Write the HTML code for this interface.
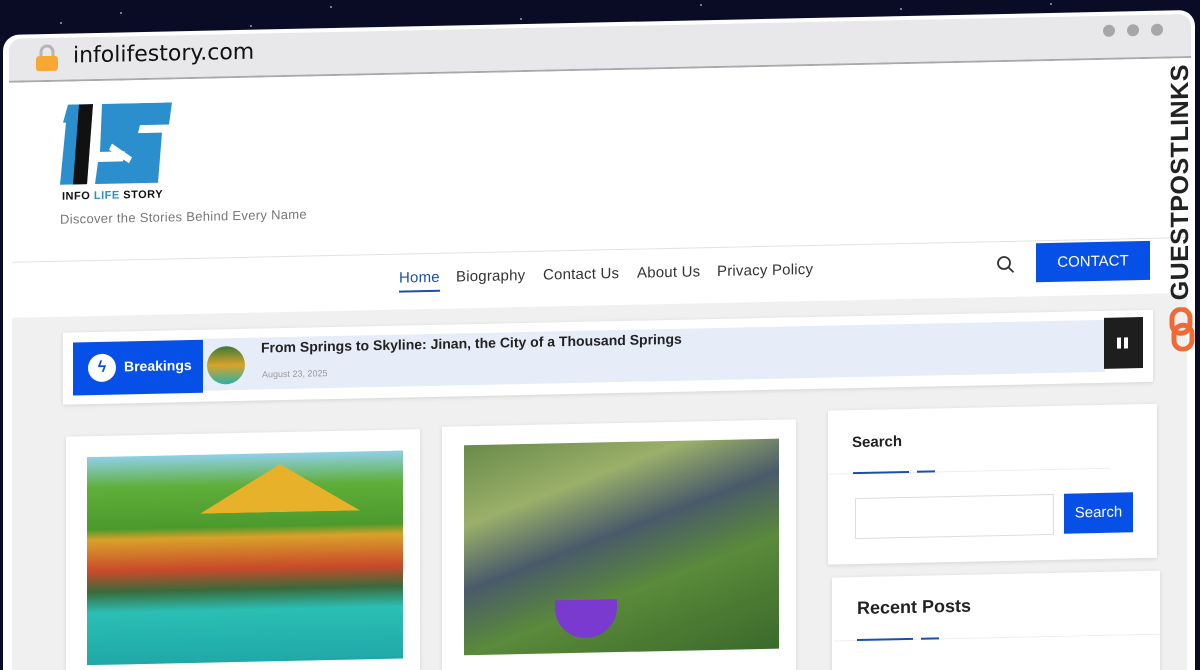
<!DOCTYPE html>
<html><head><meta charset="utf-8"><style>
*{margin:0;padding:0;box-sizing:border-box}
html,body{width:1200px;height:670px;overflow:hidden}
body{background:#0a0c26;font-family:"Liberation Sans",sans-serif;position:relative}
#clip{position:absolute;left:0;top:0;width:1200px;height:670px;overflow:hidden}
.star{position:absolute;width:2px;height:2px;background:#fff;border-radius:50%;opacity:.6}
#w{position:absolute;left:0;top:0;width:1200px;height:700px;transform-origin:0 0;transform:skewY(-1.2deg)}
.a{position:absolute}
.win{left:3px;top:35px;width:1192px;height:665px;background:#fff;border-radius:16px 16px 0 0;overflow:hidden}
.chrome{left:6px;top:4px;width:1182px;height:44px;background:#e8e8ea;border-radius:12px 12px 0 0;border-bottom:2px solid #a9a9ad}
.content{left:10px;top:50px;width:1175px;height:615px;background:#fff}
.nav a{position:absolute;font-size:15px;color:#333;text-decoration:none;letter-spacing:.2px}
.card{background:#fff;box-shadow:0 1px 4px rgba(0,0,0,.12)}
</style></head><body>
<div id="clip">
<div class="star" style="left:120px;top:12px"></div><div class="star" style="left:330px;top:6px"></div><div class="star" style="left:520px;top:18px"></div><div class="star" style="left:700px;top:4px"></div><div class="star" style="left:900px;top:8px"></div><div class="star" style="left:60px;top:22px"></div><div class="star" style="left:250px;top:25px"></div><div class="star" style="left:1050px;top:3px"></div>
<div id="w">
<div class="a win">
 <div class="a chrome"></div>
 <div class="a content"></div>
</div>
<svg class="a" style="left:35px;top:45px" width="24" height="28" viewBox="0 0 24 28"><path d="M6 13V8a6 6 0 0 1 12 0v5" fill="none" stroke="#b5b5b5" stroke-width="3"/><rect x="1" y="12" width="22" height="15" rx="3" fill="#f7a832"/></svg>
<div class="a" style="left:73px;top:45px;font-size:22px;color:#111;font-family:'DejaVu Sans',sans-serif;font-weight:500">infolifestory.com</div>
<div class="a" style="left:1103px;top:48px;width:12px;height:12px;border-radius:50%;background:#a7a7aa"></div>
<div class="a" style="left:1127px;top:48px;width:12px;height:12px;border-radius:50%;background:#a7a7aa"></div>
<div class="a" style="left:1151px;top:48px;width:12px;height:12px;border-radius:50%;background:#a7a7aa"></div>
<svg class="a" style="left:60px;top:106px" width="115" height="82" viewBox="0 0 115 82"><path d="M8 0h25l-6 80H0l6-62H3z" fill="#2a8fcc"/><path d="M19 0h14l-6 80H13z" fill="#111"/><path d="M42 0h70l-3 22H80l-2 8h24l-4 50H35l3-22h25l2-10H40z" fill="#2a8fcc"/><path d="M52 40l20 14-3 6-20-14z" fill="#fff"/></svg>
<div class="a" style="left:62px;top:192px;font-size:11px;font-weight:bold;color:#111;letter-spacing:.5px">INFO <span style="color:#2a8fcc">LIFE</span> STORY</div>
<div class="a" style="left:60px;top:213px;font-size:13px;color:#777;letter-spacing:.3px">Discover the Stories Behind Every Name</div>
<div class="a" style="left:12px;top:262px;width:1175px;height:1px;background:#e2e2e2"></div>
<div class="nav">
<a style="left:399px;top:278px;color:#1a4fb0">Home</a>
<div class="a" style="left:399px;top:299px;width:41px;height:2px;background:#1a4fb0"></div>
<a style="left:456px;top:278px">Biography</a>
<a style="left:543px;top:278px">Contact Us</a>
<a style="left:637px;top:278px">About Us</a>
<a style="left:717px;top:278px">Privacy Policy</a>
</div>
<svg class="a" style="left:996px;top:276px" width="20" height="20" viewBox="0 0 20 20"><circle cx="8" cy="8" r="6" fill="none" stroke="#333" stroke-width="1.8"/><path d="M12.5 12.5l5 5" stroke="#333" stroke-width="1.8"/></svg>
<div class="a" style="left:1036px;top:265px;width:114px;height:39px;background:#0650e8;color:#fff;font-size:15px;text-align:center;line-height:39px">CONTACT</div>
<div class="a" style="left:12px;top:318px;width:1175px;height:382px;background:#f0f0f1"></div>
<div class="a card" style="left:63px;top:334px;width:1090px;height:72px"></div>
<div class="a" style="left:203px;top:343px;width:902px;height:52px;background:#e6edf8"></div>
<div class="a" style="left:73px;top:344px;width:130px;height:53px;background:#0650e8"></div>
<div class="a" style="left:88px;top:356px;width:28px;height:28px;border-radius:50%;background:#fff;color:#0650e8;font-size:16px;text-align:center;line-height:28px;font-weight:bold">ϟ</div>
<div class="a" style="left:124px;top:361px;color:#fff;font-size:14px;font-weight:bold">Breakings</div>
<div class="a" style="left:207px;top:351px;width:38px;height:38px;border-radius:50%;background:linear-gradient(#3a7a3a,#d8a32a 50%,#2ab0a8)"></div>
<div class="a" style="left:261px;top:345px;font-size:14px;font-weight:bold;color:#222">From Springs to Skyline: Jinan, the City of a Thousand Springs</div>
<div class="a" style="left:262px;top:375px;font-size:9px;color:#999">August 23, 2025</div>
<div class="a" style="left:1104px;top:341px;width:39px;height:51px;background:#1e1e1e"></div>
<div class="a" style="left:1117px;top:361px;width:4px;height:11px;background:#fff"></div><div class="a" style="left:1124px;top:361px;width:4px;height:11px;background:#fff"></div>
<div class="a card" style="left:66px;top:438px;width:354px;height:262px"></div>
<div class="a" style="left:87px;top:459px;width:316px;height:208px;background:linear-gradient(180deg,#8fd0e8 0%,#5fae3a 15%,#4c9a2c 35%,#d9a12a 40%,#c94a2a 55%,#3a6a3a 65%,#2bbfb4 75%,#1fa8a8 100%)"></div>
<div class="a" style="left:200px;top:470px;width:160px;height:48px;background:#e7b12a;clip-path:polygon(50% 0,100% 100%,0 100%)"></div>
<div class="a card" style="left:442px;top:436px;width:354px;height:264px"></div>
<div class="a" style="left:464px;top:455px;width:315px;height:210px;background:linear-gradient(160deg,#6a8a4a 0%,#9ab06a 25%,#4a5a6a 45%,#5a8a3a 65%,#3a6a2a 100%)"></div>
<div class="a" style="left:555px;top:612px;width:62px;height:38px;border-radius:0 0 30px 30px;background:#7a3ad0"></div>
<div class="a card" style="left:828px;top:428px;width:329px;height:154px"></div>
<div class="a" style="left:852px;top:452px;font-size:15px;font-weight:bold;color:#222">Search</div>
<div class="a" style="left:830px;top:491px;width:280px;height:1px;background:#eee"></div>
<div class="a" style="left:853px;top:490px;width:56px;height:2px;background:#1a4fb0"></div><div class="a" style="left:917px;top:490px;width:18px;height:2px;background:#1a4fb0"></div>
<div class="a" style="left:855px;top:516px;width:199px;height:41px;border:1px solid #ddd;background:#fff"></div>
<div class="a" style="left:1064px;top:516px;width:69px;height:40px;background:#0650e8;color:#fff;font-size:15px;text-align:center;line-height:40px">Search</div>
<div class="a card" style="left:832px;top:595px;width:328px;height:105px"></div>
<div class="a" style="left:857px;top:616px;font-size:18px;font-weight:bold;color:#222">Recent Posts</div>
<div class="a" style="left:834px;top:658px;width:326px;height:1px;background:#eee"></div>
<div class="a" style="left:857px;top:657px;width:56px;height:2px;background:#1a4fb0"></div><div class="a" style="left:921px;top:657px;width:18px;height:2px;background:#1a4fb0"></div>
<div class="a" style="left:1166px;top:325px;transform-origin:0 0;transform:rotate(-90deg);font-size:25px;font-weight:900;color:#222;letter-spacing:.5px;white-space:nowrap">GUESTPOSTLINKS</div>
<svg class="a" style="left:1168px;top:332px" width="28" height="44" viewBox="0 0 28 44"><rect x="4" y="2" width="18" height="24" rx="9" fill="none" stroke="#f06a35" stroke-width="5"/><rect x="6" y="18" width="18" height="24" rx="9" fill="none" stroke="#f06a35" stroke-width="5"/></svg>
</div>
</div>
</body></html>
